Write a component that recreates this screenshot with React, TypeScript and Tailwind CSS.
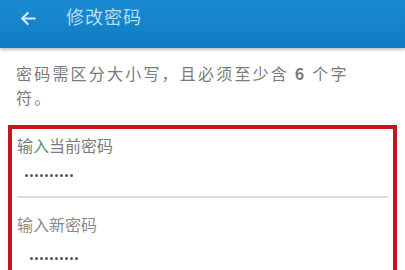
function Dots({ color }: { color: string }) {
  return (
    <div className="flex gap-[2px]">
      {Array.from({ length: 10 }).map((_, i) => (
        <span key={i} className="w-[3px] h-[3px] rounded-full" style={{ backgroundColor: color }} />
      ))}
    </div>
  );
}

export default function App() {
  return (
    <div
      className="w-[405px] h-[270px] overflow-hidden bg-white"
      style={{ fontFamily: '"Noto Sans CJK SC", "Noto Sans", sans-serif' }}
    >
      <header className="h-[48px] flex items-start pt-[3px] bg-gradient-to-b from-[#1a8bd2] to-[#0d7cc3] shadow-[0_2px_3px_rgba(0,0,0,0.25)]">
        <svg
          className="ml-[19px] mt-[6px] w-[19px] h-[19px] text-[#d8ecf8]"
          viewBox="0 0 24 24"
          fill="none"
          stroke="currentColor"
          strokeWidth={2.6}
          strokeLinecap="round"
          strokeLinejoin="round"
        >
          <path d="M20 12H5" />
          <path d="M11 5l-7 7 7 7" />
        </svg>
        <span className="ml-[28px] text-[18px] leading-[26px] tracking-[1px] text-[#b8dcf2]">修改密码</span>
      </header>

      <p className="mt-[13px] pl-[16px] w-[378px] text-[16px] leading-[24px] text-[#7a7a7a] tracking-[2.2px]">
        密码需区分大小写，且必须至少含 <span className="font-bold">6</span> 个字符。
      </p>

      <div className="mt-[16px] mx-[8px] h-[200px] border-[4px] border-b-0 border-[#c8141f] px-[5px]">
        <div className="pt-[5px] border-b-[2px] border-[#dcdcdc]">
          <div className="text-[16px] leading-[22px] text-[#7a7a7a]">
            输<span className="text-[#4d9a5c]">入</span>当前密码
          </div>
          <div className="mt-[18px] pl-[8px] pb-[19px]">
            <Dots color="#4a5a78" />
          </div>
        </div>
        <div className="pt-[15px]">
          <div className="text-[16px] leading-[22px] text-[#8a8a8a]">输入新密码</div>
          <div className="mt-[22px] pl-[13px]">
            <Dots color="#555" />
          </div>
        </div>
      </div>
    </div>
  );
}
